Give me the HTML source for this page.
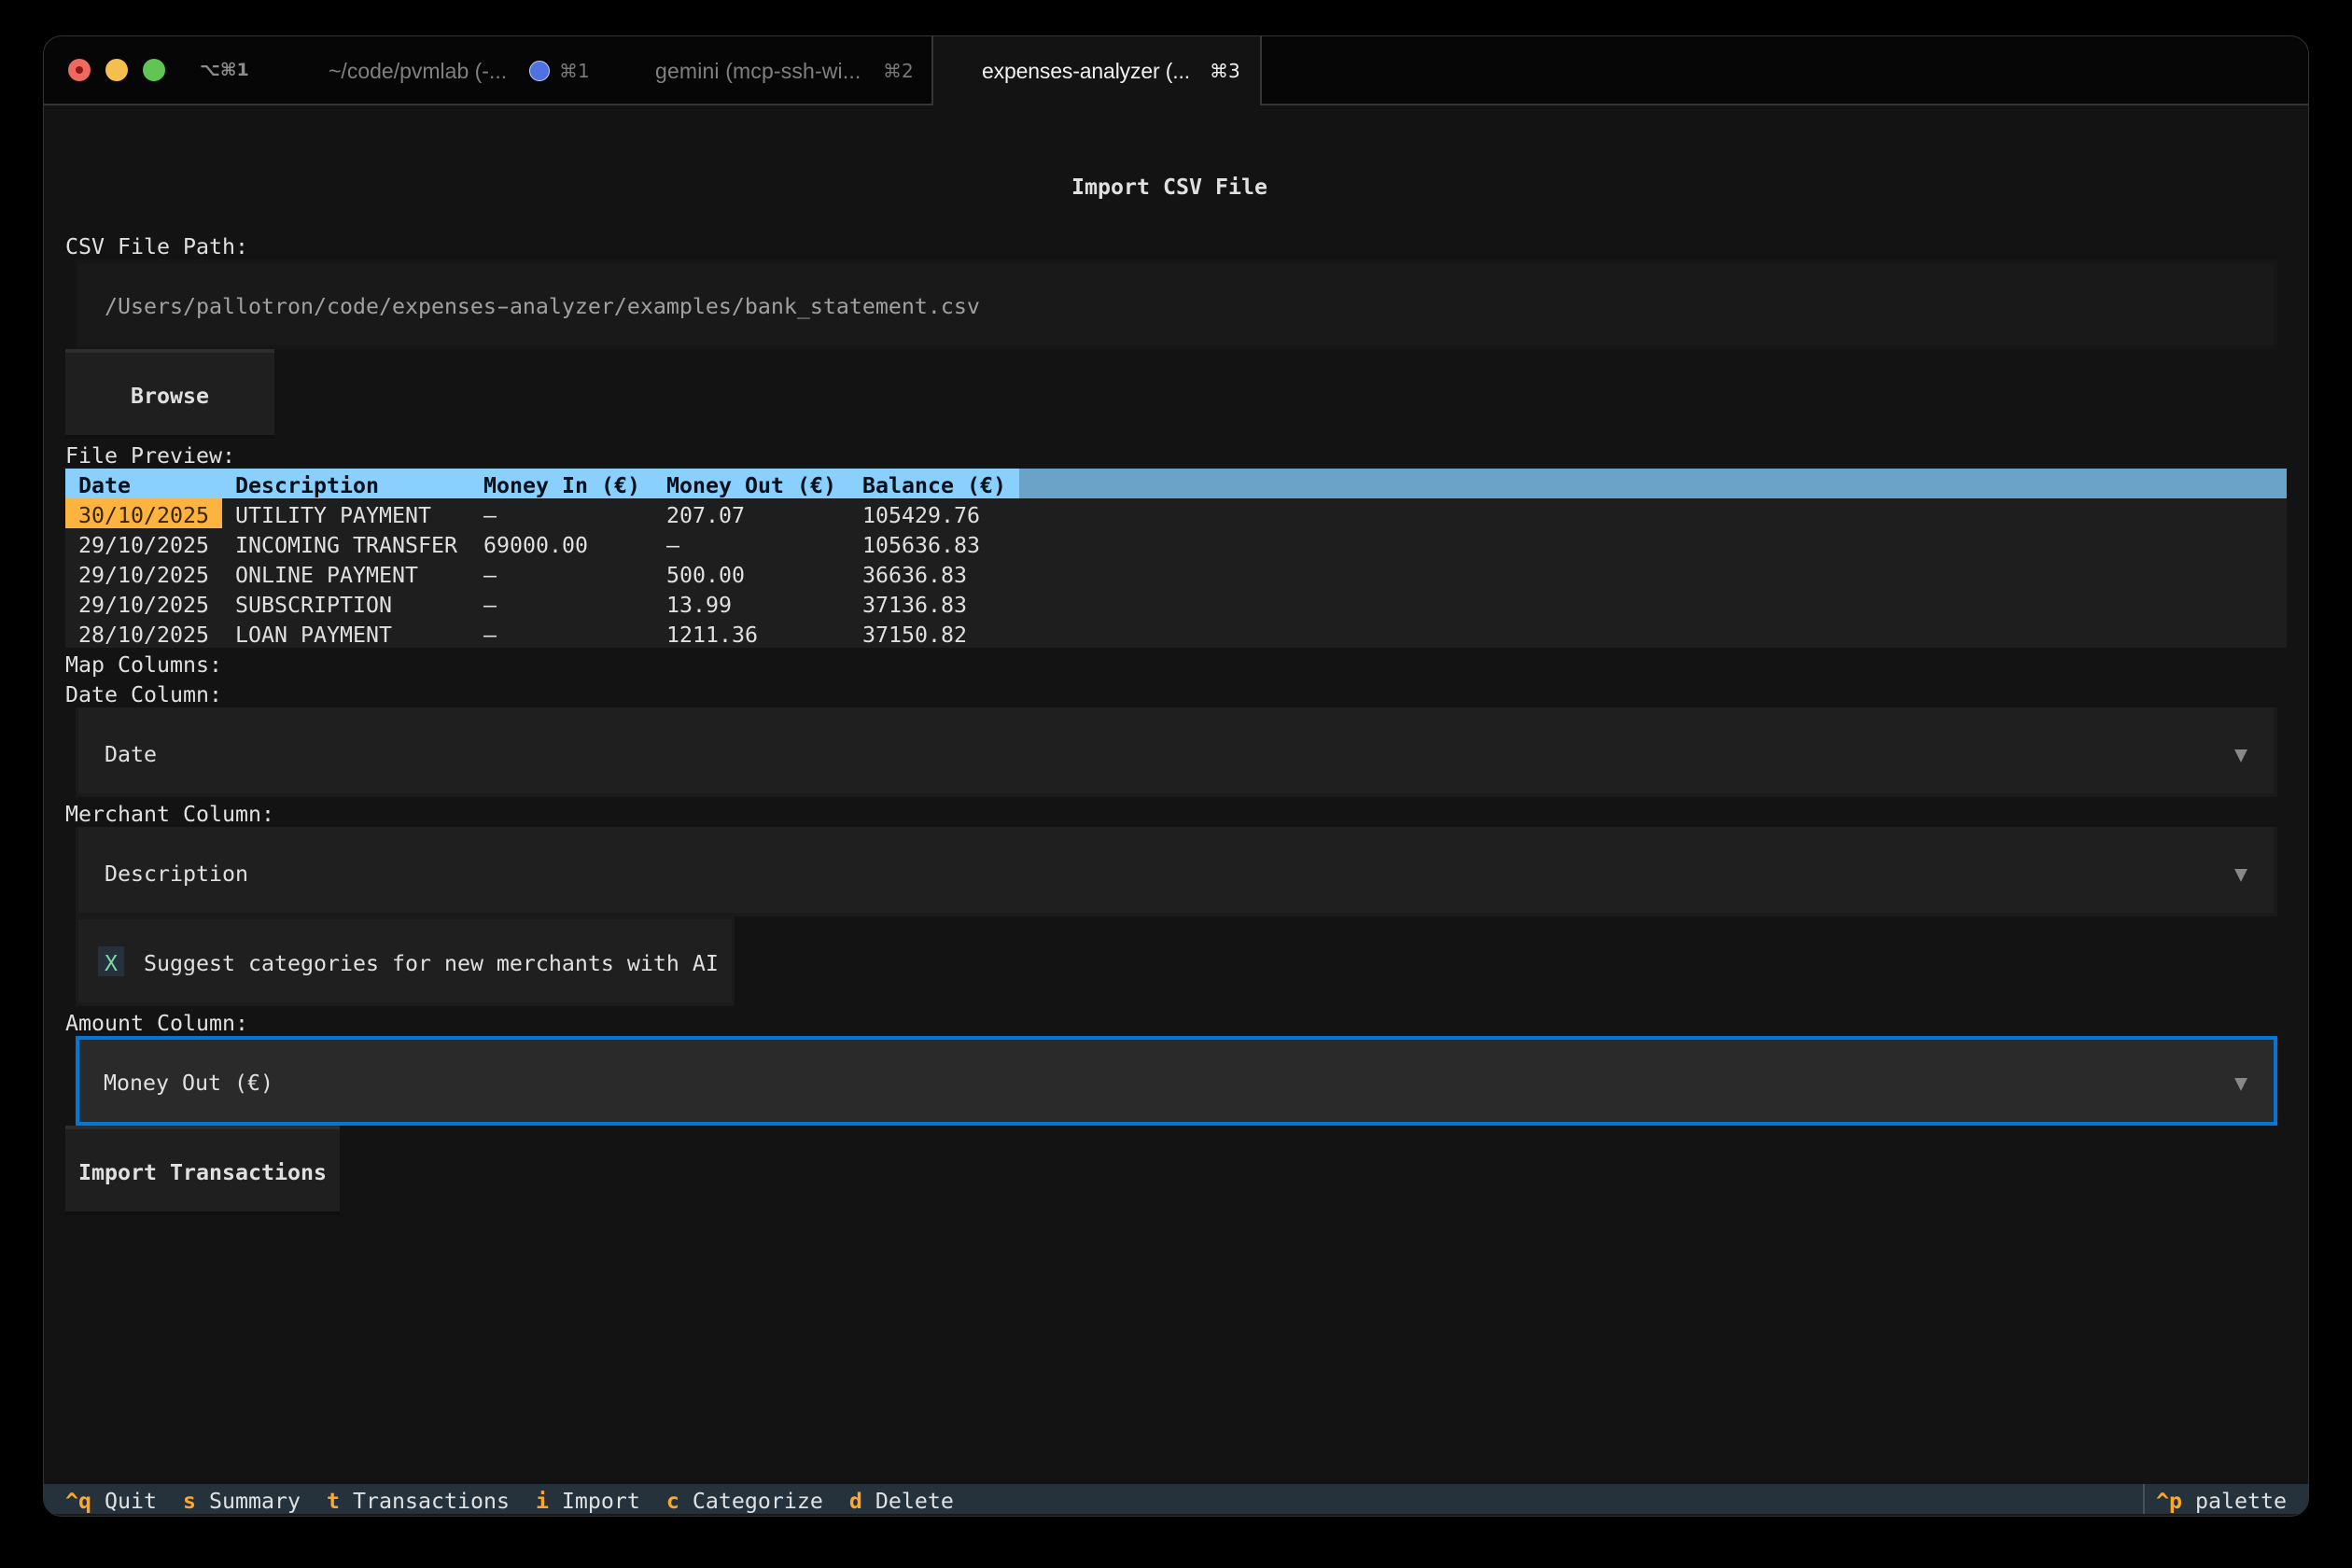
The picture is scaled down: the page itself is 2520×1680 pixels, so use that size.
<!DOCTYPE html>
<html lang="en">
<head>
<meta charset="utf-8">
<title>Import CSV File</title>
<style>
html,body{margin:0;padding:0;background:#000;width:2520px;height:1680px;overflow:hidden}
#win{position:absolute;left:46px;top:38px;width:2428px;height:1587px;box-sizing:border-box;background:#131313;border-radius:20px;overflow:hidden;border:1px solid #333}
#root{position:absolute;left:-47px;top:-39px;width:2520px;height:1680px}
.b{position:absolute}
.t{position:absolute;font-family:"DejaVu Sans Mono","Liberation Mono",monospace;font-size:23.25px;line-height:32px;height:32px;margin-top:3px;white-space:pre;color:#e0e0e0}
.bd{font-weight:bold}
.s{position:absolute;font-family:"Liberation Sans",sans-serif;font-size:23px;line-height:30px;white-space:pre;color:#808080}
.g{font-family:"DejaVu Sans","Liberation Sans",sans-serif;font-size:20px}
.k{color:#ffa62b;font-weight:bold}
.l{color:#dde1e4}
.h{display:inline-block;transform:scaleX(1.7)}
</style>
</head>
<body>
<div id="win"><div id="root">
  <!-- title bar -->
  <div class="b" style="left:46px;top:38px;width:953px;height:74px;background:#060606"></div>
  <div class="b" style="left:1351px;top:38px;width:1123px;height:74px;background:#060606"></div>
  <div class="b" style="left:46px;top:111px;width:953px;height:2px;background:#363636"></div>
  <div class="b" style="left:1351px;top:111px;width:1123px;height:2px;background:#363636"></div>
  <div class="b" style="left:998px;top:38px;width:2px;height:75px;background:#363636"></div>
  <div class="b" style="left:1350px;top:38px;width:2px;height:75px;background:#363636"></div>

  <div class="b" style="left:73px;top:63px;width:24px;height:24px;border-radius:50%;background:#ee6a5f"></div>
  <div class="b" style="left:81px;top:71px;width:8px;height:8px;border-radius:50%;background:#8a1a12"></div>
  <div class="b" style="left:113px;top:63px;width:24px;height:24px;border-radius:50%;background:#f5bf4f"></div>
  <div class="b" style="left:153px;top:63px;width:24px;height:24px;border-radius:50%;background:#61c554"></div>

  <div class="s g" style="left:214px;top:60px;color:#8c8c8c;font-weight:bold;font-size:19px">⌥⌘1</div>
  <div class="s" style="left:352px;top:61px">~/code/pvmlab (-...</div>
  <div class="b" style="left:567px;top:65px;width:20px;height:20px;border-radius:50%;background:#4f72e0;border:1px solid #c5d2f5"></div>
  <div class="s g" style="left:599px;top:61px;color:#777">⌘1</div>
  <div class="s" style="left:702px;top:61px;letter-spacing:.15px">gemini (mcp-ssh-wi...</div>
  <div class="s g" style="left:946px;top:61px;color:#777">⌘2</div>
  <div class="s" style="left:1052px;top:61px;color:#f0f0f0;letter-spacing:-.15px">expenses-analyzer (...</div>
  <div class="s g" style="left:1296px;top:61px;color:#f0f0f0">⌘3</div>

  <!-- content -->
  <div class="t bd" style="left:1148px;top:182px">Import CSV File</div>
  <div class="t" style="left:70px;top:246px">CSV File Path:</div>

  <div class="b" style="left:81px;top:278px;width:2359px;height:96px;background:#161616"></div>
  <div class="b" style="left:84px;top:283px;width:2352px;height:87px;background:#191919"></div>
  <div class="t" style="left:112px;top:310px;color:#a0a0a0">/Users/pallotron/code/expenses<span class="h">-</span>analyzer/examples/bank_statement.csv</div>

  <div class="b" style="left:70px;top:374px;width:224px;height:96px;background:#0f0f0f"></div>
  <div class="b" style="left:70px;top:374px;width:224px;height:92px;background:#1f1f1f"></div>
  <div class="b" style="left:70px;top:374px;width:224px;height:4px;background:#2d2d2d"></div>
  <div class="t bd" style="left:140px;top:406px">Browse</div>

  <div class="t" style="left:70px;top:470px">File Preview:</div>

  <!-- table -->
  <div class="b" style="left:70px;top:502px;width:2380px;height:192px;background:#1e1e1e"></div>
  <div class="b" style="left:70px;top:502px;width:1022px;height:32px;background:#8ad0ff"></div>
  <div class="b" style="left:1092px;top:502px;width:1358px;height:32px;background:#6ba3c8"></div>
  <div class="b" style="left:70px;top:534px;width:168px;height:32px;background:#fdb33f"></div>

  <div class="t bd" style="left:84px;top:502px;color:#05101a">Date</div>
  <div class="t bd" style="left:252px;top:502px;color:#05101a">Description</div>
  <div class="t bd" style="left:518px;top:502px;color:#05101a">Money In (€)</div>
  <div class="t bd" style="left:714px;top:502px;color:#05101a">Money Out (€)</div>
  <div class="t bd" style="left:924px;top:502px;color:#05101a">Balance (€)</div>

  <div class="t" style="left:84px;top:534px;color:#3a2600">30/10/2025</div>
  <div class="t" style="left:252px;top:534px">UTILITY PAYMENT</div>
  <div class="t" style="left:518px;top:534px">–</div>
  <div class="t" style="left:714px;top:534px">207.07</div>
  <div class="t" style="left:924px;top:534px">105429.76</div>

  <div class="t" style="left:84px;top:566px">29/10/2025</div>
  <div class="t" style="left:252px;top:566px">INCOMING TRANSFER</div>
  <div class="t" style="left:518px;top:566px">69000.00</div>
  <div class="t" style="left:714px;top:566px">–</div>
  <div class="t" style="left:924px;top:566px">105636.83</div>

  <div class="t" style="left:84px;top:598px">29/10/2025</div>
  <div class="t" style="left:252px;top:598px">ONLINE PAYMENT</div>
  <div class="t" style="left:518px;top:598px">–</div>
  <div class="t" style="left:714px;top:598px">500.00</div>
  <div class="t" style="left:924px;top:598px">36636.83</div>

  <div class="t" style="left:84px;top:630px">29/10/2025</div>
  <div class="t" style="left:252px;top:630px">SUBSCRIPTION</div>
  <div class="t" style="left:518px;top:630px">–</div>
  <div class="t" style="left:714px;top:630px">13.99</div>
  <div class="t" style="left:924px;top:630px">37136.83</div>

  <div class="t" style="left:84px;top:662px;height:29px;overflow:hidden">28/10/2025</div>
  <div class="t" style="left:252px;top:662px;height:29px;overflow:hidden">LOAN PAYMENT</div>
  <div class="t" style="left:518px;top:662px;height:29px;overflow:hidden">–</div>
  <div class="t" style="left:714px;top:662px;height:29px;overflow:hidden">1211.36</div>
  <div class="t" style="left:924px;top:662px;height:29px;overflow:hidden">37150.82</div>

  <div class="t" style="left:70px;top:694px">Map Columns:</div>
  <div class="t" style="left:70px;top:726px">Date Column:</div>

  <!-- date select -->
  <div class="b" style="left:81px;top:758px;width:2359px;height:96px;background:#1a1a1a"></div>
  <div class="b" style="left:84px;top:758px;width:2352px;height:92px;background:#1f1f1f"></div>
  <div class="t" style="left:112px;top:790px">Date</div>
  <div class="t" style="left:2394px;top:790px;color:#888">▼</div>

  <div class="t" style="left:70px;top:854px">Merchant Column:</div>

  <!-- merchant select -->
  <div class="b" style="left:81px;top:886px;width:2359px;height:96px;background:#1a1a1a"></div>
  <div class="b" style="left:84px;top:886px;width:2352px;height:92px;background:#1f1f1f"></div>
  <div class="t" style="left:112px;top:918px">Description</div>
  <div class="t" style="left:2394px;top:918px;color:#888">▼</div>

  <!-- checkbox -->
  <div class="b" style="left:81px;top:982px;width:706px;height:96px;background:#1a1a1a"></div>
  <div class="b" style="left:84px;top:985px;width:700px;height:89px;background:#1f1f1f"></div>
  <div class="b" style="left:105px;top:1014px;width:28px;height:32px;background:#25323b"></div>
  <div class="t" style="left:112px;top:1014px;color:#7fd6a6">X</div>
  <div class="t" style="left:154px;top:1014px">Suggest categories for new merchants with AI</div>

  <div class="t" style="left:70px;top:1078px">Amount Column:</div>

  <!-- amount select -->
  <div class="b" style="left:81px;top:1110px;width:2359px;height:96px;box-sizing:border-box;background:#2a2a2a;border:4px solid #0178d4"></div>
  <div class="t" style="left:111px;top:1142px">Money Out (€)</div>
  <div class="t" style="left:2394px;top:1142px;color:#888">▼</div>

  <!-- import button -->
  <div class="b" style="left:70px;top:1206px;width:294px;height:96px;background:#0f0f0f"></div>
  <div class="b" style="left:70px;top:1206px;width:294px;height:92px;background:#1f1f1f"></div>
  <div class="b" style="left:70px;top:1206px;width:294px;height:4px;background:#2d2d2d"></div>
  <div class="t bd" style="left:84px;top:1238px">Import Transactions</div>

  <!-- footer -->
  <div class="b" style="left:46px;top:1590px;width:2428px;height:32px;background:#26323b"></div>
  <div class="b" style="left:46px;top:1622px;width:2428px;height:3px;background:#161a1d"></div>
  <div class="t" style="left:70px;top:1590px"><span class="k">^q</span><span class="l"> Quit  </span><span class="k">s</span><span class="l"> Summary  </span><span class="k">t</span><span class="l"> Transactions  </span><span class="k">i</span><span class="l"> Import  </span><span class="k">c</span><span class="l"> Categorize  </span><span class="k">d</span><span class="l"> Delete</span></div>
  <div class="b" style="left:2296px;top:1590px;width:2px;height:32px;background:#46515a"></div>
  <div class="t" style="left:2310px;top:1590px"><span class="k">^p</span><span class="l"> palette</span></div>
</div></div>
</body>
</html>
